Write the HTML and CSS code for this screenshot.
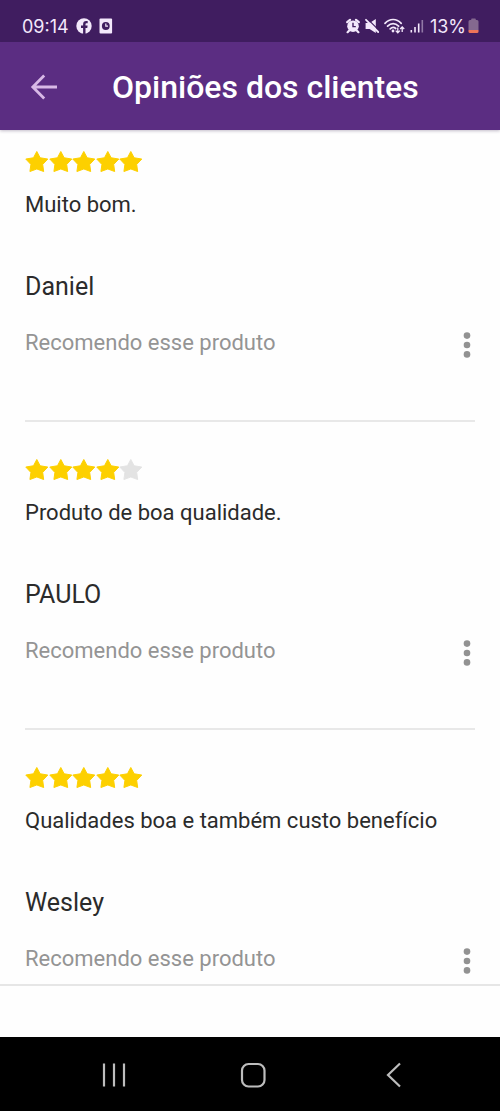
FILE: index.html
```html
<!DOCTYPE html>
<html lang="pt-BR">
<head>
<meta charset="utf-8">
<meta name="viewport" content="width=device-width, initial-scale=1">
<title>Opiniões dos clientes</title>
<link rel="stylesheet" href="styles.css">
</head>
<body>
<svg class="defs" aria-hidden="true">
  <symbol id="star" viewBox="0 0 24 22"><path d="M12 .8 15.4 7.2 23.2 8.5 18 14 19 21.2 12 18.6 5 21.2 6 14 .8 8.5 8.6 7.2Z" stroke="currentColor" stroke-width="1" stroke-linejoin="round" fill="currentColor"/></symbol>
  <symbol id="dots" viewBox="0 0 8 26"><circle cx="4" cy="3.6" r="3.3"/><circle cx="4" cy="13" r="3.3"/><circle cx="4" cy="22.4" r="3.3"/></symbol>
</svg>
<div class="status">
  <div class="status-group">
    <span class="clock">09:14</span>
    <svg class="app-icon" width="16" height="16" viewBox="0 0 16 16"><circle cx="8" cy="8" r="7.7" fill="#f3e8fb"/><path d="M7.1 16V10H5V7.6H7.1V6.2C7.1 4 8.3 3 10.2 3h1.5v2.2h-1.1c-.8 0-1.1.4-1.1 1.1v1.3h2.1L11.3 10H9.5v6Z" fill="#401d60"/></svg>
    <svg class="app-icon" width="14" height="16" viewBox="0 0 14 16"><rect x=".5" y=".5" width="12.6" height="15" rx="1" fill="#f3e8fb"/><circle cx="6.8" cy="8" r="3.9" fill="#401d60"/><path d="M6.8 5.4V8.2H9" fill="none" stroke="#f3e8fb" stroke-width="1.2"/></svg>
  </div>
  <div class="status-group status-right">
    <svg width="14" height="16" viewBox="0 0 14 16"><circle cx="7" cy="8.2" r="5.8" fill="#f3e8fb"/><path d="M1.2 4.2 4 1.8M12.8 4.2 10 1.8M3 12.8 1.6 14.2M11 12.8l1.4 1.4" stroke="#f3e8fb" stroke-width="2.2" stroke-linecap="round"/><path d="M7 4.8V8.6H9.8" fill="none" stroke="#401d60" stroke-width="1.4"/></svg>
    <svg width="14" height="16" viewBox="0 0 14 16"><path d="M.6 5H4.6L10.8 1V15L4.6 11H.6Z" fill="#f3e8fb"/><path d="M2.2.6 14.4 12.8" stroke="#401d60" stroke-width="1.2"/><path d="M1 1.8 13.2 14" stroke="#f3e8fb" stroke-width="1.8" stroke-linecap="round"/></svg>
    <svg width="21" height="16" viewBox="0 0 21 16"><g fill="none" stroke="#f3e8fb" stroke-width="1.7" stroke-linecap="round"><path d="M1 5.3C5.7.2 12.5.2 17.2 5.3M3.6 8.2C7 4.7 11.2 4.7 14.6 8.2M6.2 10.9C8.1 9 10 9 11.7 10.5"/></g><circle cx="9" cy="13" r="1.4" fill="#f3e8fb"/><path d="M13.8 9.5v5M11.7 12.6l2.1 2.2 2.1-2.2M18.2 14V9.5M16.2 11l2-2.1 2 2.1" fill="none" stroke="#f3e8fb" stroke-width="1.3"/></svg>
    <svg class="signal" width="14" height="16" viewBox="0 0 14 16"><g stroke="#f3e8fb" stroke-width="1.6"><path d="M1.3 12v2.5M5 9v5.5M8.7 5.5v9"/><path d="M12.3 2v12.5" opacity=".45"/></g></svg>
    <span class="percent">13%</span>
    <svg width="11" height="16" viewBox="0 0 11 16"><path d="M3.2 2V1.3Q3.2.5 4 .5H7Q7.8.5 7.8 1.3V2H9Q10.5 2 10.5 3.5V12H.5V3.5Q.5 2 2 2Z" fill="#84698f"/><path d="M.5 12H10.5V13.5Q10.5 15 9 15H2Q.5 15 .5 13.5Z" fill="#ed7459"/></svg>
  </div>
</div>
<header class="appbar">
  <button class="back" aria-label="Voltar"><svg width="28" height="28" viewBox="0 0 28 28"><path d="M27 14H3M14.2 2.6 2.8 14l11.4 11.4" fill="none" stroke="#d8b9e6" stroke-width="2.8"/></svg></button>
  <h1 class="title">Opiniões dos clientes</h1>
</header>
<main class="reviews">
  <article class="review">
    <div class="stars" role="img" aria-label="5 de 5 estrelas"><svg><use href="#star"/></svg><svg><use href="#star"/></svg><svg><use href="#star"/></svg><svg><use href="#star"/></svg><svg><use href="#star"/></svg></div>
    <p class="comment">Muito bom.</p>
    <h2 class="author">Daniel</h2>
    <div class="verdict"><span>Recomendo esse produto</span><button class="more" aria-label="Mais opções"><svg width="8" height="26"><use href="#dots"/></svg></button></div>
  </article>
  <article class="review">
    <div class="stars" role="img" aria-label="4 de 5 estrelas"><svg><use href="#star"/></svg><svg><use href="#star"/></svg><svg><use href="#star"/></svg><svg><use href="#star"/></svg><svg class="off"><use href="#star"/></svg></div>
    <p class="comment">Produto de boa qualidade.</p>
    <h2 class="author">PAULO</h2>
    <div class="verdict"><span>Recomendo esse produto</span><button class="more" aria-label="Mais opções"><svg width="8" height="26"><use href="#dots"/></svg></button></div>
  </article>
  <article class="review">
    <div class="stars" role="img" aria-label="5 de 5 estrelas"><svg><use href="#star"/></svg><svg><use href="#star"/></svg><svg><use href="#star"/></svg><svg><use href="#star"/></svg><svg><use href="#star"/></svg></div>
    <p class="comment">Qualidades boa e também custo benefício</p>
    <h2 class="author">Wesley</h2>
    <div class="verdict"><span>Recomendo esse produto</span><button class="more" aria-label="Mais opções"><svg width="8" height="26"><use href="#dots"/></svg></button></div>
  </article>
</main>
<div class="bottom-strip"></div>
<nav class="sysnav">
  <button aria-label="Recentes"><svg width="26" height="26" viewBox="0 0 26 26"><path d="M3 1.5v23M13 1.5v23M23 1.5v23" stroke="#bdbdbd" stroke-width="2.2"/></svg></button>
  <button aria-label="Início"><svg width="26" height="26" viewBox="0 0 26 26"><rect x="2" y="2" width="22.5" height="22.5" rx="6.5" fill="none" stroke="#bdbdbd" stroke-width="2.2"/></svg></button>
  <button aria-label="Voltar"><svg width="26" height="26" viewBox="0 0 26 26"><path d="M20 1.5 8 13l12 11.5" fill="none" stroke="#bdbdbd" stroke-width="2.2"/></svg></button>
</nav>
</body>
</html>
```
FILE: styles.css
```css
* { box-sizing: border-box; }
body {
  margin: 0;
  height: 100vh;
  display: flex;
  flex-direction: column;
  background: #fefefe;
  color: #2b2b2b;
  font-family: Roboto, sans-serif;
}
h1, h2, p { margin: 0; font-weight: 400; }
button { border: 0; padding: 0; background: none; cursor: pointer; }
svg { display: block; flex: none; }
.defs { display: none; }

.status {
  flex: none;
  display: flex;
  justify-content: space-between;
  height: 42px;
  padding: 10px 21px 0 22px;
  background: #401d60;
  color: #f3e8fb;
  font-family: Inter, sans-serif;
  font-size: 18px;
}
.status-group { display: flex; align-items: center; gap: 7px; }
.status-right { gap: 5px; }
.signal { margin-right: 1px; }
.status-right .percent { margin-right: -3px; }

.appbar {
  flex: none;
  display: flex;
  align-items: center;
  gap: 54px;
  height: 88px;
  padding: 2px 30px 0;
  background: #5b2d82;
  box-shadow: 0 1px 3px rgba(60, 40, 80, .3);
}
.title { color: #fff; font-size: 32px; font-weight: 500; line-height: 40px; }

.reviews { flex: 1; min-height: 0; overflow: hidden; padding: 0 25px; }
.review { padding: 36px 0 62px; border-bottom: 2px solid #e8e8e8; }
.review:first-child { padding-top: 20px; }
.stars { display: flex; width: 118px; color: #fdd000; }
.stars svg { flex: 1; min-width: 0; height: 23px; }
.stars .off { color: #e3e3e3; }
.comment { margin-top: 18px; font-size: 22px; line-height: 28px; }
.author { margin-top: 52px; font-size: 25px; line-height: 32px; }
.verdict {
  display: flex;
  justify-content: space-between;
  margin-top: 26px;
  color: #949494;
  font-size: 22px;
  line-height: 28px;
}
.more { padding: 3px 4px 0; fill: #929292; }

.bottom-strip { flex: none; height: 53px; border-top: 2px solid #e6e6e6; }
.sysnav {
  flex: none;
  display: flex;
  align-items: center;
  justify-content: space-around;
  height: 74px;
  padding: 2px 37px 0 44px;
  background: #000;
}
```
